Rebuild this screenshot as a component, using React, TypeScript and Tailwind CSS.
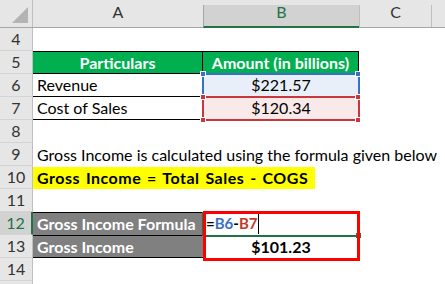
import React from "react";

const font = { fontFamily: "Lato, 'Open Sans', sans-serif" };

const RowHead: React.FC<{ n?: number; active?: boolean }> = ({ n, active }) => (
  <div
    className={`w-[33px] shrink-0 h-full flex items-center justify-center text-[16px] border-b border-[#d4d4d4] ${
      active
        ? "bg-[#d2d2d2] text-[#217346] border-r-2 border-r-[#217346]"
        : "bg-[#e6e6e6] text-[#333] border-r border-r-[#bfbfbf]"
    }`}
  >
    {n}
  </div>
);

const Row: React.FC<{ n?: number; active?: boolean; children?: React.ReactNode }> = ({
  n,
  active,
  children,
}) => (
  <div className="flex h-[23px] w-[445px] bg-white">
    <RowHead n={n} active={active} />
    {children}
  </div>
);

export default function App() {
  return (
    <div className="relative w-[445px] h-[284px] overflow-hidden bg-white text-black" style={font}>
      {/* column headers */}
      <div className="flex h-[28px] bg-[#e6e6e6] border-b border-[#a6a6a6]">
        <div className="w-[33px] shrink-0 relative border-r border-[#bfbfbf]">
          <div className="absolute right-[4px] bottom-[4px] w-0 h-0 border-l-[16px] border-l-transparent border-b-[16px] border-b-[#b4b4b4]" />
        </div>
        <div className="w-[170px] shrink-0 flex items-end justify-center pb-[3px] text-[16px] text-[#333]">A</div>
        <div className="w-[156px] shrink-0 mt-[5px] flex items-end justify-center pb-[2px] text-[16px] text-[#217346] bg-[#d2d2d2] border-l border-[#a6a6a6] border-b-2 border-b-[#217346] -mb-[1px]">
          B
        </div>
        <div className="w-[73px] shrink-0 mt-[5px] flex items-end justify-center pb-[3px] text-[16px] text-[#333] border-l border-r border-[#bfbfbf]">
          C
        </div>
      </div>

      <Row n={4} />
      <Row n={5}>
        <div className="w-[170px] shrink-0 bg-[#00b050] border-y border-r border-black text-white font-bold text-[16px] flex items-center justify-center">
          Particulars
        </div>
        <div className="w-[156px] shrink-0 bg-[#00b050] border-y border-r border-black text-white font-bold text-[16px] flex items-center justify-center">
          Amount (in billions)
        </div>
      </Row>
      <Row n={6}>
        <div className="w-[170px] shrink-0 border-b border-black text-[16px] flex items-center pl-[4px]">Revenue</div>
        <div className="w-[156px] shrink-0 border-b border-black bg-[#e8eff9] text-[16px] flex items-center justify-center">
          $221.57
        </div>
      </Row>
      <Row n={7}>
        <div className="w-[170px] shrink-0 border-b border-black text-[16px] flex items-center pl-[4px]">Cost of Sales</div>
        <div className="w-[156px] shrink-0 border-b border-black bg-[#f9e9e9] text-[16px] flex items-center justify-center">
          $120.34
        </div>
      </Row>
      <Row n={8} />
      <Row n={9}>
        <div className="flex items-center pl-[4px] text-[16px] whitespace-nowrap">
          Gross Income is calculated using the formula given below
        </div>
      </Row>
      <Row n={10}>
        <div className="flex items-center pl-[4px] pr-[7px] mt-[1px] bg-[#ffff00] text-[16px] font-bold whitespace-nowrap tracking-[0.5px] [word-spacing:1.5px]">
          Gross Income = Total Sales - COGS
        </div>
      </Row>
      <Row n={11} />
      <Row n={12} active>
        <div className="w-[170px] shrink-0 bg-[#808080] border-t border-black text-white font-bold text-[16px] flex items-center pl-[4px]">
          Gross Income Formula
        </div>
        <div className="w-[156px] shrink-0 flex items-center pl-[3px] text-[15px] font-bold">
          <span>=</span>
          <span className="text-[#3a6fc9]">B6</span>
          <span>-</span>
          <span className="text-[#c0392b]">B7</span>
          <span className="ml-[1px] w-[1px] h-[20px] bg-black" />
        </div>
      </Row>
      <Row n={13}>
        <div className="w-[170px] shrink-0 bg-[#808080] border-y border-black text-white font-bold text-[16px] flex items-center pl-[4px]">
          Gross Income
        </div>
        <div className="w-[156px] shrink-0 flex items-center justify-center text-[16px] font-bold">$101.23</div>
      </Row>
      <Row n={14} />
      <Row />

      {/* blue range B6 */}
      <div className="absolute left-[202px] top-[73px] w-[158px] h-[25px] border-2 border-[#3a6fc9]" />
      <div className="absolute left-[200px] top-[71px] w-[6px] h-[6px] bg-[#3a6fc9] border border-white" />
      <div className="absolute left-[355px] top-[71px] w-[6px] h-[6px] bg-[#3a6fc9] border border-white" />
      {/* red range B7 */}
      <div className="absolute left-[202px] top-[96px] w-[158px] h-[25px] border-2 border-[#c8373c]" />
      <div className="absolute left-[200px] top-[94px] w-[6px] h-[6px] bg-[#c8373c] border border-white" />
      <div className="absolute left-[355px] top-[94px] w-[6px] h-[6px] bg-[#c8373c] border border-white" />
      <div className="absolute left-[200px] top-[117px] w-[6px] h-[6px] bg-[#c8373c] border border-white" />
      <div className="absolute left-[355px] top-[117px] w-[6px] h-[6px] bg-[#c8373c] border border-white" />

      {/* active cell B12 */}
      <div className="absolute left-[202px] top-[212px] w-[2px] h-[24px] bg-[#217346]" />
      <div className="absolute left-[203px] top-[235px] w-[155px] h-[2px] bg-[#217346]" />
      <div className="absolute left-[356px] top-[233px] w-[5px] h-[5px] bg-[#217346]" />
      {/* red highlight box */}
      <div className="absolute left-[203px] top-[211px] w-[157px] h-[50px] border-[3px] border-[#ff0000]" />
    </div>
  );
}
